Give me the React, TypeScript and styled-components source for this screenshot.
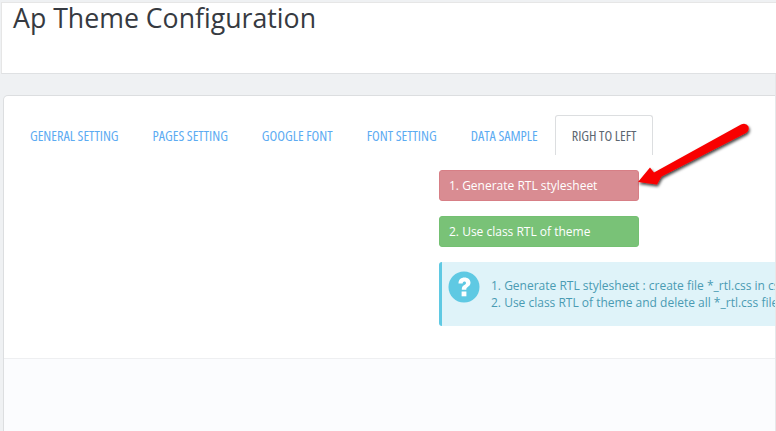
import React from 'react';
import styled, { createGlobalStyle } from 'styled-components';

const GlobalStyle = createGlobalStyle`
    html, body {
        margin: 0;
        padding: 0;
        background: #eff1f3;
        overflow: hidden;
    }
`;

const Page = styled.div`
    position: relative;
    width: 776px;
    height: 431px;
    overflow: hidden;
    padding-top: 2px;
    box-sizing: border-box;
    font-family: 'Open Sans', sans-serif;
`;

const Header = styled.header`
    height: 72px;
    box-sizing: border-box;
    margin-left: 1px;
    padding: 0 11px;
    background: #fff;
    border-top: 1px solid #e6e6e6;
    border-bottom: 1px solid #dfe1e3;
    border-left: 1px solid #e6e6e6;
`;

const Title = styled.h1`
    margin: 0;
    font-size: 26.7px;
    font-weight: 400;
    line-height: 30px;
    color: #363a41;
`;

const Panel = styled.section`
    margin: 21px 0 0 3px;
    height: 336px;
    box-sizing: border-box;
    background: #fff;
    border: 1px solid #dcdee0;
    border-bottom: none;
    border-radius: 5px 0 0 0;
    display: flex;
    flex-direction: column;
    overflow: hidden;
`;

const Tabs = styled.nav`
    display: flex;
    margin-top: 19px;
    padding-left: 9px;
    height: 40px;
`;

const Tab = styled.div<{ $active?: boolean }>`
    height: 40px;
    box-sizing: border-box;
    padding: 0 16px 1px;
    display: flex;
    align-items: center;
    font-family: 'Open Sans', sans-serif;
    font-stretch: 75%;
    font-size: 14.2px;
    white-space: nowrap;
    color: ${p => (p.$active ? '#5c6670' : '#5cabf2')};
    background: #fff;
    border: 1px solid ${p => (p.$active ? '#dcdee0' : 'transparent')};
    border-bottom: none;
    border-radius: 3px 3px 0 0;
`;

const Content = styled.div`
    flex: 1;
    padding: 15px 0 0 435px;
    display: flex;
    flex-direction: column;
    align-items: flex-start;
`;

const ActionButton = styled.div<{ $tone: 'red' | 'green' }>`
    width: 200px;
    height: 31px;
    box-sizing: border-box;
    margin-bottom: 15px;
    padding-left: 9px;
    display: flex;
    align-items: center;
    font-size: 12px;
    color: #fff;
    border-radius: 3px;
    background: ${p => (p.$tone === 'red' ? '#d98c92' : '#79c277')};
    border: 1px solid ${p => (p.$tone === 'red' ? '#d77f86' : '#74c072')};
`;

const Alert = styled.div`
    width: 500px;
    height: 64px;
    box-sizing: border-box;
    display: flex;
    align-items: flex-start;
    background: #dff3f9;
    border-left: 3px solid #5fc9e3;
    border-radius: 3px 0 0 3px;
    padding: 9px 0 0 6px;
    color: #4a9bb3;
`;

const AlertIcon = styled.svg`
    width: 32px;
    height: 32px;
    flex: none;
    margin-right: 11px;
`;

const AlertText = styled.div`
    padding-top: 6px;
    font-size: 12px;
    line-height: 17px;
    white-space: nowrap;
`;

const Footer = styled.div`
    height: 72px;
    flex: none;
    background: #fbfcfe;
    border-top: 1px solid #eeeff1;
`;

const RightEdge = styled.div`
    position: absolute;
    top: 74px;
    right: 0;
    bottom: 0;
    width: 1px;
    background: #e6e7e9;
`;

const ArrowOverlay = styled.svg`
    position: absolute;
    left: 630px;
    top: 118px;
    width: 130px;
    height: 75px;
`;

function RedArrow() {
    return (
        <ArrowOverlay viewBox="630 118 130 75">
            <defs>
                <filter id="arrowShadow" x="-20%" y="-20%" width="140%" height="140%">
                    <feDropShadow dx="1" dy="2" stdDeviation="1.5" floodColor="#000" floodOpacity="0.75" />
                </filter>
            </defs>
            <path
                d="M638 182 L650 167.5 L654 172.5 L741 124.5 Q746 122.5 748.5 126.5 Q749.5 130.5 746 133 L661.5 176.5 L657 184.5 Z"
                fill="#f80000"
                filter="url(#arrowShadow)"
            />
        </ArrowOverlay>
    );
}

export default function App() {
    return (
        <Page>
            <GlobalStyle />
            <Header>
                <Title>Ap Theme Configuration</Title>
            </Header>
            <Panel>
                <Tabs>
                    <Tab>GENERAL SETTING</Tab>
                    <Tab>PAGES SETTING</Tab>
                    <Tab>GOOGLE FONT</Tab>
                    <Tab>FONT SETTING</Tab>
                    <Tab>DATA SAMPLE</Tab>
                    <Tab $active>RIGH TO LEFT</Tab>
                </Tabs>
                <Content>
                    <ActionButton $tone="red">1. Generate RTL stylesheet</ActionButton>
                    <ActionButton $tone="green">2. Use class RTL of theme</ActionButton>
                    <Alert>
                        <AlertIcon viewBox="0 0 32 32">
                            <circle cx="16" cy="16" r="15.5" fill="#5fc9e3" />
                            <path
                                d="M10.5 12.5 C10.5 8.5 13 6.5 16.5 6.5 C20 6.5 22.5 8.7 22.5 11.8 C22.5 14 21 15.2 19.5 16.2 C18.5 16.9 18.3 17.5 18.3 18.8 L13.8 18.8 C13.8 16.5 14.3 15.3 16 14.2 C17.2 13.4 18 12.9 18 11.9 C18 11 17.4 10.4 16.4 10.4 C15.3 10.4 14.8 11.2 14.6 12.5 Z"
                                fill="#fff"
                            />
                            <rect x="13.6" y="20.5" width="4.8" height="4.8" fill="#fff" />
                        </AlertIcon>
                        <AlertText>
                            1. Generate RTL stylesheet : create file *_rtl.css in css folder
                            <br />
                            2. Use class RTL of theme and delete all *_rtl.css files
                        </AlertText>
                    </Alert>
                </Content>
                <Footer />
            </Panel>
            <RightEdge />
            <RedArrow />
        </Page>
    );
}
